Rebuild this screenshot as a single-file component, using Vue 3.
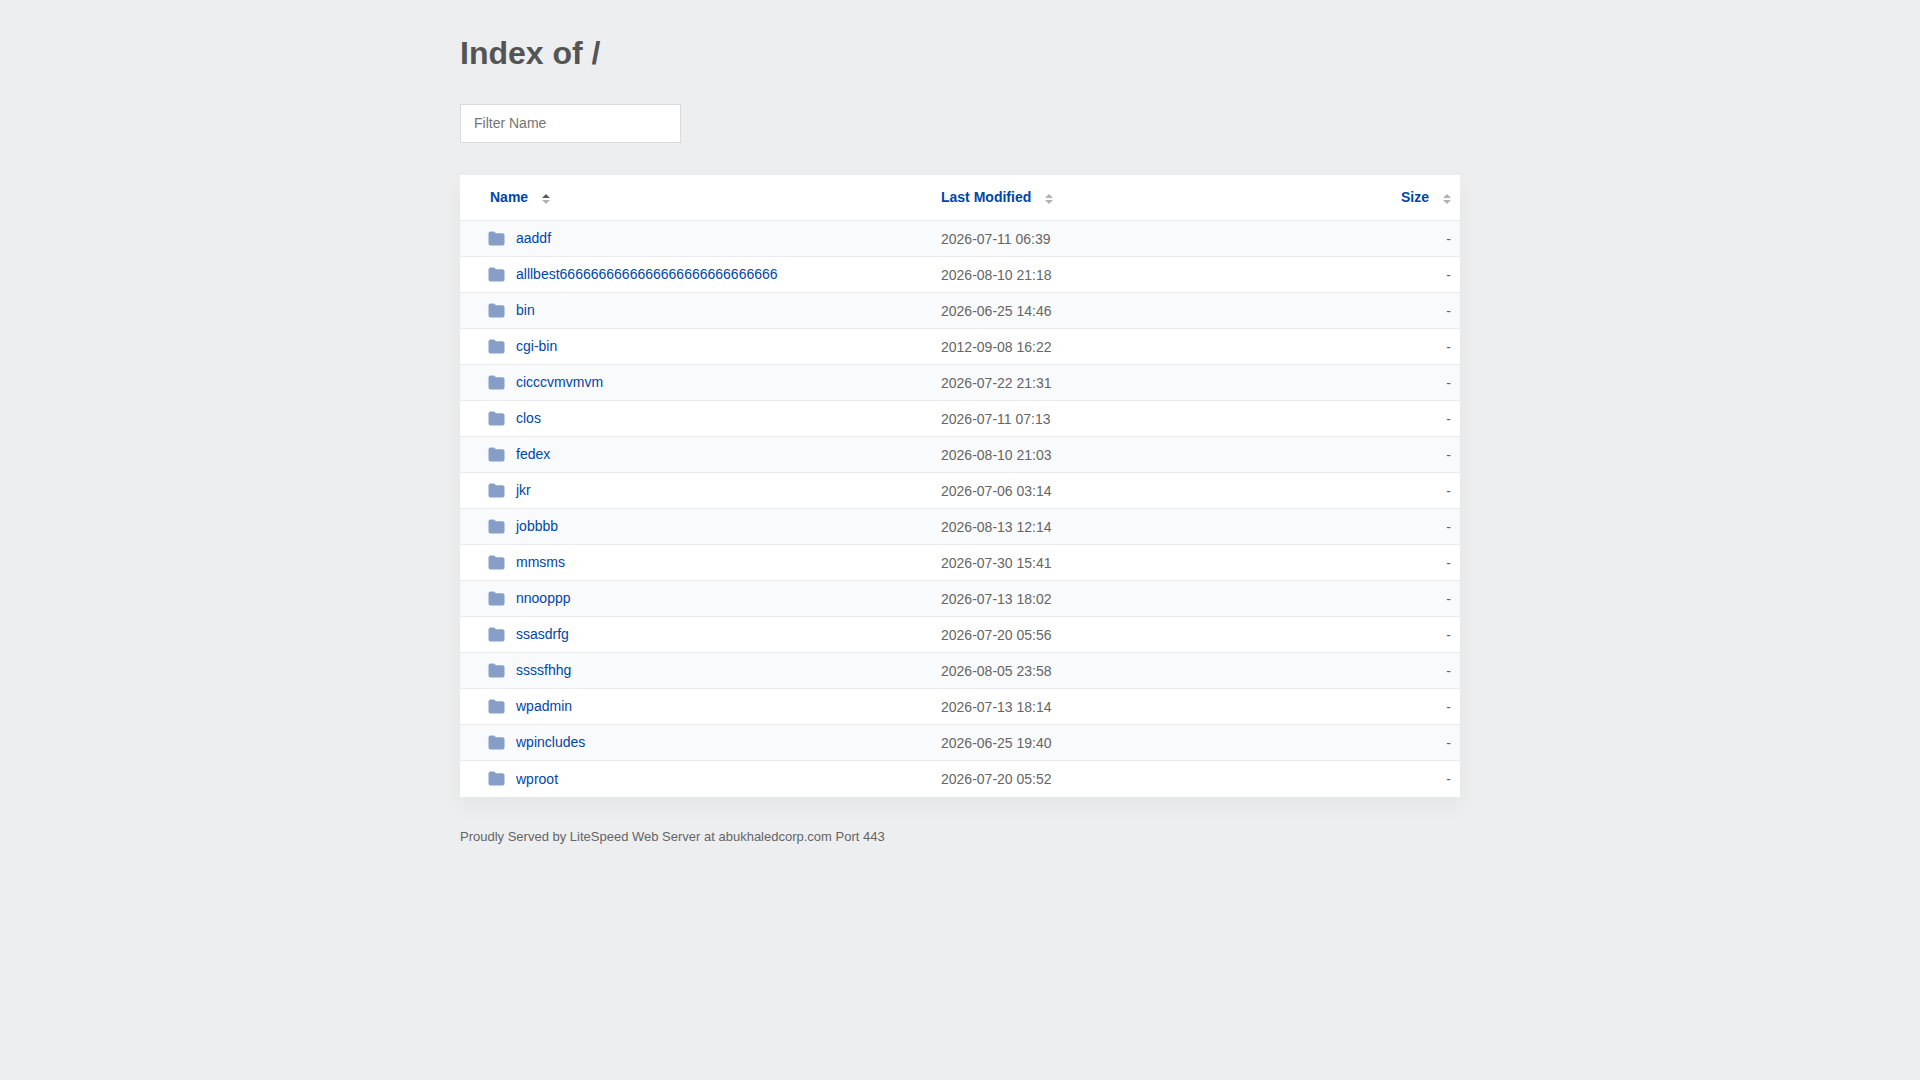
<script setup>
import { computed, ref } from 'vue'

const entries = [
  ['aaddf', '2026-07-11 06:39'],
  ['alllbest6666666666666666666666666666', '2026-08-10 21:18'],
  ['bin', '2026-06-25 14:46'],
  ['cgi-bin', '2012-09-08 16:22'],
  ['cicccvmvmvm', '2026-07-22 21:31'],
  ['clos', '2026-07-11 07:13'],
  ['fedex', '2026-08-10 21:03'],
  ['jkr', '2026-07-06 03:14'],
  ['jobbbb', '2026-08-13 12:14'],
  ['mmsms', '2026-07-30 15:41'],
  ['nnooppp', '2026-07-13 18:02'],
  ['ssasdrfg', '2026-07-20 05:56'],
  ['ssssfhhg', '2026-08-05 23:58'],
  ['wpadmin', '2026-07-13 18:14'],
  ['wpincludes', '2026-06-25 19:40'],
  ['wproot', '2026-07-20 05:52']
].map(([name, modified]) => ({ name, modified, size: '-' }))

const columns = [
  { key: 'name', label: 'Name' },
  { key: 'modified', label: 'Last Modified' },
  { key: 'size', label: 'Size' }
]

const filter = ref('')
const sortKey = ref('name')
const direction = ref('ascending')

const rows = computed(() => {
  const term = filter.value.toLowerCase()
  const sign = direction.value === 'ascending' ? 1 : -1
  return entries
    .filter((entry) => entry.name.toLowerCase().includes(term))
    .sort((a, b) => sign * a[sortKey.value].localeCompare(b[sortKey.value]))
})

function sortBy(key) {
  direction.value = sortKey.value === key && direction.value === 'ascending' ? 'descending' : 'ascending'
  sortKey.value = key
}

function sortState(key) {
  return sortKey.value === key ? direction.value : 'none'
}
</script>

<template>
  <main class="page">
    <h1>Index of /</h1>
    <input v-model="filter" class="filter" type="text" placeholder="Filter Name" aria-label="Filter Name">
    <table class="listing">
      <thead>
        <tr>
          <th v-for="column in columns" :key="column.key" :class="column.key" :aria-sort="sortState(column.key)" scope="col">
            <button type="button" class="sort" @click="sortBy(column.key)">
              <span>{{ column.label }}</span>
              <svg class="arrows" width="8" height="10" viewBox="0 0 8 10" aria-hidden="true">
                <path :class="{ active: sortState(column.key) === 'ascending' }" d="M0 4 4 0l4 4z" />
                <path :class="{ active: sortState(column.key) === 'descending' }" d="M0 6h8l-4 4z" />
              </svg>
            </button>
          </th>
        </tr>
      </thead>
      <tbody>
        <tr v-for="row in rows" :key="row.name">
          <td class="name">
            <a :href="'/' + row.name + '/'">
              <svg class="folder" width="17" height="15" viewBox="0 0 17 15" aria-hidden="true">
                <path d="M2.5.5h3.6L8 2.3h6.5a2 2 0 0 1 2 2v8.2a2 2 0 0 1-2 2h-12a2 2 0 0 1-2-2v-10a2 2 0 0 1 2-2z" />
              </svg>
              <span>{{ row.name }}</span>
            </a>
          </td>
          <td class="modified">{{ row.modified }}</td>
          <td class="size">{{ row.size }}</td>
        </tr>
      </tbody>
    </table>
    <footer>Proudly Served by LiteSpeed Web Server at abukhaledcorp.com Port 443</footer>
  </main>
</template>

<style>
body {
  margin: 0;
  background: #edeef0;
}
</style>

<style scoped>
.page {
  box-sizing: border-box;
  max-width: 1040px;
  margin: 0 auto;
  padding: 32px 20px;
  color: #656565;
  font: 14px/20px "Liberation Sans", Arial, sans-serif;
}

h1 {
  margin: 0 0 30px;
  color: #545454;
  font-size: 32px;
  line-height: 42px;
}

.filter {
  display: block;
  box-sizing: border-box;
  width: 221px;
  height: 39px;
  margin: 0 0 32px;
  padding: 0 13px 2px;
  border: 1px solid #d8dadd;
  background: #fff;
  color: inherit;
  font: inherit;
}

.filter::placeholder {
  color: #757575;
}

.listing {
  width: 100%;
  table-layout: fixed;
  border-collapse: separate;
  border-spacing: 0;
  background: #fff;
  box-shadow: 0 8px 18px rgba(0, 64, 56, 0.05);
}

th,
td {
  box-sizing: border-box;
  padding: 0 9px;
  border-bottom: 1px solid #e9ecef;
  text-align: left;
}

th {
  height: 46px;
  padding-bottom: 2px;
}

td {
  height: 36px;
}

tbody tr:last-child td {
  border-bottom: 0;
}

tbody tr:nth-child(odd) {
  background: #f9fafc;
}

.name {
  width: 472px;
  padding-left: 28px;
}

td.name {
  padding-top: 2px;
}

th.name {
  padding-left: 30px;
}

th.size,
td.size {
  width: 120px;
  text-align: right;
}

.sort {
  display: inline-flex;
  align-items: center;
  gap: 14px;
  padding: 0;
  border: 0;
  background: none;
  color: #0045ab;
  font: inherit;
  font-weight: bold;
  cursor: pointer;
}

.arrows {
  margin-top: 4px;
  fill: #b3b3b3;
}

.arrows .active {
  fill: #5c5c5c;
}

a {
  display: inline-flex;
  align-items: center;
  gap: 11px;
  color: #0045ab;
  text-decoration: none;
}

a:hover {
  text-decoration: underline;
}

.folder {
  fill: #859fc7;
}

footer {
  padding-top: 30px;
  font-size: 13px;
}
</style>
